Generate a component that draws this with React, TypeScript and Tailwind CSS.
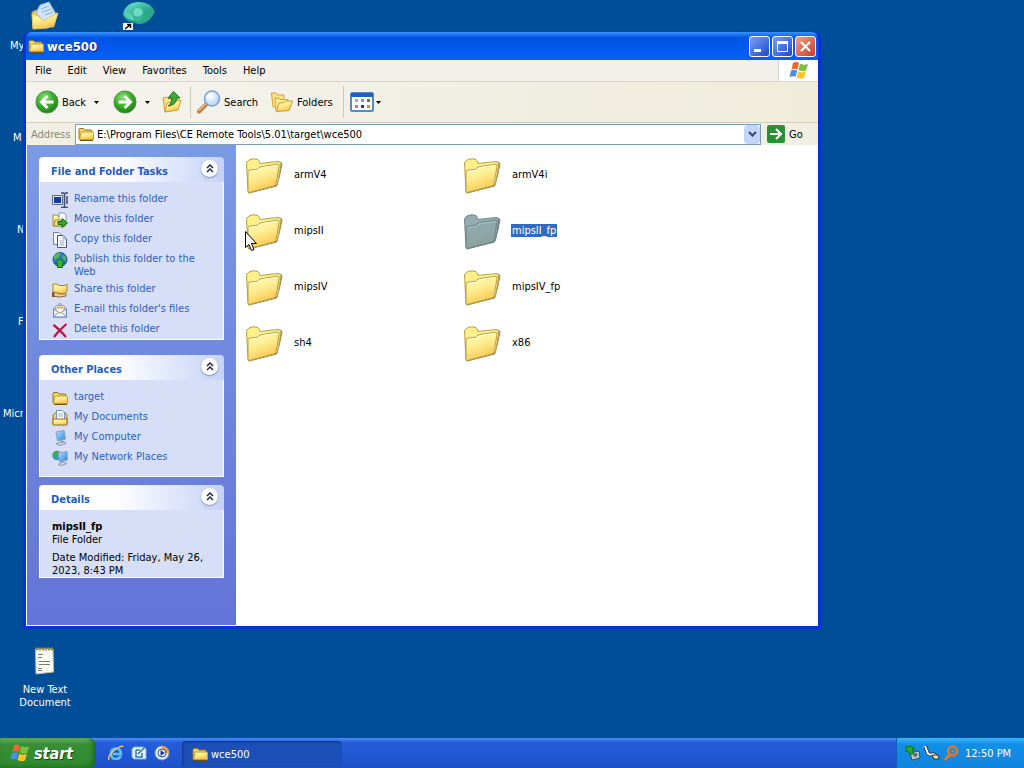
import type { ReactNode } from 'react'

const folders = ['armV4', 'armV4i', 'mipsII', 'mipsII_fp', 'mipsIV', 'mipsIV_fp', 'sh4', 'x86']
const selected = 'mipsII_fp'

function Gradients() {
  return (
    <svg className="absolute h-0 w-0" aria-hidden="true">
      <defs>
        <linearGradient id="folderFront" x1="0" y1="0" x2="0.4" y2="1">
          <stop offset="0" stopColor="#fffbb5" />
          <stop offset="0.5" stopColor="#fdee92" />
          <stop offset="1" stopColor="#f9c64f" />
        </linearGradient>
        <linearGradient id="folderSel" x1="0" y1="0" x2="0.4" y2="1">
          <stop offset="0" stopColor="#8faeb4" />
          <stop offset="1" stopColor="#8ca09c" />
        </linearGradient>
        <radialGradient id="greenBall" cx="0.4" cy="0.3" r="0.75">
          <stop offset="0" stopColor="#8be07c" />
          <stop offset="0.5" stopColor="#3fb02f" />
          <stop offset="1" stopColor="#1c7a12" />
        </radialGradient>
        <radialGradient id="lens" cx="0.4" cy="0.35" r="0.7">
          <stop offset="0" stopColor="#ffffff" />
          <stop offset="1" stopColor="#a5d2f7" />
        </radialGradient>
        <linearGradient id="teal" x1="0" y1="0" x2="0.6" y2="1">
          <stop offset="0" stopColor="#7be6d0" />
          <stop offset="0.5" stopColor="#35b79a" />
          <stop offset="1" stopColor="#127a63" />
        </linearGradient>
        <linearGradient id="screen" x1="0" y1="0" x2="1" y2="1">
          <stop offset="0" stopColor="#a8e8fb" />
          <stop offset="1" stopColor="#2a7fe0" />
        </linearGradient>
      </defs>
    </svg>
  )
}

function BigFolder({ active }: { active: boolean }) {
  const line = active ? '#6f8487' : '#b7a04a'
  const shade = active ? '#6b7f86' : '#9a7f48'
  return (
    <svg viewBox="0 0 48 48" className="h-12 w-12 shrink-0">
      <path d="M9 41 L36.500 34 Q40 24 42 11.500 L40 10 L37 33 L8 40.500 Z" fill={shade} stroke={shade} />
      <path d="M6.500 11 Q7 9 10 7.500 Q14 6 18 7.500 Q19.500 8.500 20 11.500 L38 9.500 Q41.500 9.500 41 12 L37.500 32 L8 39.500 Z" fill={active ? '#93adb0' : '#fff08c'} stroke={line} />
      <path d="M8 19.500 Q8 18.500 10 18 L17 17.500 Q19 15 22 14.500 L38.500 12 Q39.500 12 39 14 L36 32.500 Q35.500 33.500 34 34 L9.500 40.500 Q8 40.500 8 39 Z" fill={active ? 'url(#folderSel)' : 'url(#folderFront)'} stroke={line} />
      <path d="M9.500 21 Q9.500 19.500 12 19 L18 18.500 Q20 16 23 15.500 L37.500 13.500" fill="none" stroke={active ? '#a9c0c4' : '#fffde0'} />
    </svg>
  )
}

function SmallFolder() {
  return (
    <svg viewBox="0 0 16 16" className="h-4 w-4 shrink-0">
      <path d="M1 13V3.500Q1 2.500 2 2.500H5.500L7 4H13Q14 4 14 5V13Z" fill="#f5d560" stroke="#96711a" />
      <path d="M1.500 13.500 3 6.500Q3 6 4 6H14.500Q15.500 6 15.500 7V13.500Z" fill="url(#folderFront)" stroke="#c39a35" />
      <path d="M2 14.500H15" stroke="#6b5315" />
    </svg>
  )
}

function Flag({ className }: { className: string }) {
  return (
    <svg viewBox="0 0 20 19" className={className}>
      <path d="M4 2Q7.500 0 10 2L8.500 8.500Q5.500 7 2.500 8.500Z" fill="#f0662f" />
      <path d="M11 2.500Q14.500 4.500 19 3L17 9.500Q13 11 9.500 9Z" fill="#80c03a" />
      <path d="M2 9.500Q5.500 8 8.200 9.500L6.500 16Q4 14.500.5 16Z" fill="#4a8fe8" />
      <path d="M9.200 10.200Q13 12 16.800 10.500L15 17Q11 18.500 7.500 16.500Z" fill="#fbc52e" />
    </svg>
  )
}

function RoundArrow({ forward }: { forward?: boolean }) {
  return (
    <svg viewBox="0 0 24 24" className="h-6 w-6">
      <circle cx="12" cy="12" r="11" fill="url(#greenBall)" stroke="#4e8f45" />
      {forward ? (
        <path d="M5.500 12H17M11.500 6 17.500 12 11.500 18" fill="none" stroke="#fff" strokeWidth="3" />
      ) : (
        <path d="M18.500 12H7M12.500 6 6.500 12 12.500 18" fill="none" stroke="#fff" strokeWidth="3" />
      )}
    </svg>
  )
}

function Caret() {
  return (
    <svg viewBox="0 0 5 3" className="h-[3px] w-[5px]">
      <path d="M0 0H5L2.500 3Z" fill="#000" />
    </svg>
  )
}

function UpIcon() {
  return (
    <svg viewBox="0 0 24 24" className="h-6 w-6">
      <path d="M3 8 7 7 9 9 18 7V19L5 22Z" fill="#fbe58a" stroke="#c99e37" />
      <path d="M5 22 7 13 21 10 18 20Z" fill="url(#folderFront)" stroke="#c99e37" />
      <path d="M8 16Q12 14 11.500 8H8L13.500 1.500 20 8H16.500Q16.500 15 8 16Z" fill="#3cab35" stroke="#1e7820" />
    </svg>
  )
}

function SearchIcon() {
  return (
    <svg viewBox="0 0 24 24" className="h-6 w-6">
      <path d="M2 21.500 9.500 14" stroke="#bb7a42" strokeWidth="4" strokeLinecap="round" />
      <path d="M2 20.500 8.500 14" stroke="#ecc08c" strokeWidth="1.500" strokeLinecap="round" />
      <circle cx="15" cy="8.500" r="7.500" fill="url(#lens)" stroke="#7f9fd0" strokeWidth="1.500" />
      <path d="M10.500 8Q11 4 15 4" fill="none" stroke="#fff" strokeWidth="1.500" />
    </svg>
  )
}

function FoldersIcon() {
  return (
    <svg viewBox="0 0 24 24" className="h-6 w-6">
      <path d="M1.500 3H6L7 5H14V17H3Z" fill="#fbe58a" stroke="#d0a23a" />
      <path d="M5 8H9L10 9.500H18V20L6 21Z" fill="#fdeb97" stroke="#d0a23a" />
      <path d="M6.500 21.500 9 13 14 12.500 15.500 11 22.500 11 19 20.500Z" fill="url(#folderFront)" stroke="#cf9a2c" />
    </svg>
  )
}

function ViewsIcon() {
  return (
    <svg viewBox="0 0 24 20" className="h-5 w-6">
      <rect x="1" y="1" width="22" height="18" rx="1" fill="#fff" stroke="#2a62b8" strokeWidth="1.500" />
      <path d="M1 1H23V5H1Z" fill="#1f5fc0" />
      <path d="M5 7h3v3H5z" fill="#98a9cb" />
      <path d="M11 7h3v3h-3z" fill="#6fa0d8" />
      <path d="M17 7h3v3h-3z" fill="#41923c" />
      <path d="M5 13h3v3H5z" fill="#e07252" />
      <path d="M11 13h3v3h-3z" fill="#173f9f" />
      <path d="M17 13h3v3h-3z" fill="#c0a020" />
    </svg>
  )
}

function Svg16({ children }: { children: ReactNode }) {
  return (
    <svg viewBox="0 0 16 16" className="h-4 w-4 shrink-0">
      {children}
    </svg>
  )
}

const tasks = [
  {
    label: 'Rename this folder',
    icon: (
      <Svg16>
        <path d="M.5 3.500H10.500V12.500H.5Z" fill="#e4e7f2" stroke="#5c6784" />
        <path d="M2 5H9V11H2Z" fill="#1739a5" />
        <path d="M11.500 2.500H13.500V13.500H11.500Z" fill="#c8cee2" />
        <path d="M9 1H11.500L12.500 2 13.500 1H16M12.500 2V15M9 15.500H11.500L12.500 14.500 13.500 15.500H16M15 4V12" fill="none" stroke="#46506e" strokeWidth="1.500" />
      </Svg16>
    ),
  },
  {
    label: 'Move this folder',
    icon: (
      <Svg16>
        <path d="M1 14V3H5L7 5H13V14Z" fill="url(#folderFront)" stroke="#a88b3b" />
        <path d="M7 1H12L14 3V9H7Z" fill="#fff" stroke="#8797b0" />
        <path d="M2 14 3 8H12L13 14Z" fill="#f8dc78" stroke="#a88b3b" />
        <path d="M6 9.500H10V6.500L15.500 11 10 15.500V12.500H6Z" fill="#36a92d" stroke="#176b18" />
      </Svg16>
    ),
  },
  {
    label: 'Copy this folder',
    icon: (
      <Svg16>
        <path d="M1.500.5H7L9.500 3V12.500H1.500Z" fill="#f5f8ff" stroke="#7183a6" />
        <path d="M5.500 3.500H11L14.500 7V15.500H5.500Z" fill="#fff" stroke="#3f5480" />
        <path d="M11 3.500V7H14.500M7.500 9H12.500M7.500 11H12.500M7.500 13H12.500" fill="none" stroke="#8ea5c8" />
      </Svg16>
    ),
  },
  {
    label: 'Publish this folder to the Web',
    icon: (
      <Svg16>
        <circle cx="8" cy="7.500" r="7" fill="#2c78c8" stroke="#27548c" />
        <path d="M2 4Q5 0 9 1L7 5 4 7 2 8ZM10 3 14 5 14 9 11 7Z" fill="#55bb50" />
        <path d="M5.500 15.500V11.500H3L8 6.500 13 11.500H10.500V15.500Z" fill="#36b52e" stroke="#176b18" />
      </Svg16>
    ),
  },
  {
    label: 'Share this folder',
    icon: (
      <Svg16>
        <path d="M1 11V2H5L7 3.500H13L15 2V9L13 12Z" fill="url(#folderFront)" stroke="#a98227" />
        <path d="M0 11 4 10 7 12 14 11.500 14 14 7 15 0 14Z" fill="#f3c99a" stroke="#91683a" />
        <path d="M0 10.500H2.500V15H0Z" fill="#7a5c2c" />
      </Svg16>
    ),
  },
  {
    label: "E-mail this folder's files",
    icon: (
      <Svg16>
        <path d="M1.500 7 8 1.500 14.500 7V15H1.500Z" fill="#dce9fa" stroke="#6887b0" />
        <path d="M1.500 7V15H14.500V7L8 11Z" fill="#eef5ff" stroke="#6887b0" />
        <path d="M4 3.500H12V8.500L8 11 4 8.500Z" fill="#fff" stroke="#c4a27a" />
        <path d="M5 4.500H11V6.500H5Z" fill="#f2a25c" />
        <path d="M1.500 15 6 10.500M14.500 15 10 10.500" stroke="#6887b0" />
      </Svg16>
    ),
  },
  {
    label: 'Delete this folder',
    icon: (
      <Svg16>
        <path d="M1.500 3Q7 7 14 15M14.500 2Q7 8 2 15" fill="none" stroke="#b8163f" strokeWidth="2.200" />
      </Svg16>
    ),
  },
]

const places = [
  { label: 'target', icon: <SmallFolder /> },
  {
    label: 'My Documents',
    icon: (
      <Svg16>
        <path d="M1 14V5L4 2.500H13L15 5V14Z" fill="#f5d560" stroke="#96711a" />
        <path d="M4.500.5H10L12.500 3V10H4.500Z" fill="#fff" stroke="#7790b8" />
        <path d="M6 4H11M6 6H11" stroke="#8ea5c8" />
        <path d="M1 15V9H15V15Z" fill="url(#folderFront)" stroke="#96711a" />
      </Svg16>
    ),
  },
  {
    label: 'My Computer',
    icon: (
      <Svg16>
        <path d="M4 2 12 .5 13.500 9 5.500 11Z" fill="url(#screen)" stroke="#8a9cc8" />
        <path d="M9 10 11 10 12 13H8Z" fill="#9aa5c4" />
        <path d="M4 13.500 12 12 14 13.500 7 15.500Z" fill="#dfe3f0" stroke="#8a90ad" />
      </Svg16>
    ),
  },
  {
    label: 'My Network Places',
    icon: (
      <Svg16>
        <circle cx="5" cy="5.500" r="4.800" fill="#3a9ad0" />
        <path d="M1 4Q3 0 7 1L6 5 3 8Z" fill="#3fae48" />
        <path d="M6 3 15 1.500 15.500 10 8 12Z" fill="url(#screen)" stroke="#8a9cc8" />
        <path d="M6 14.500 11 12 15 13.500 9 15.500Z" fill="#dfe3f0" stroke="#8a90ad" />
      </Svg16>
    ),
  },
]

function Panel({ title, className, children }: { title: string; className: string; children: ReactNode }) {
  return (
    <section className={className}>
      <header className="flex h-[25px] items-center justify-between rounded-t bg-linear-to-r from-white from-40% to-[#c6d3f7] pr-1.5 pl-3">
        <h2 className="pt-1 text-[11px] font-bold text-[#215dc6]">{title}</h2>
        <button aria-label={`Collapse ${title}`} className="mb-0.5 flex h-[17px] w-[17px] items-center justify-center rounded-full bg-white shadow-[0_1px_2px_#7d8cc0]">
          <svg viewBox="0 0 8 9" className="h-[9px] w-2">
            <path d="M1 4 4 1 7 4M1 8 4 5 7 8" fill="none" stroke="#1c2a50" strokeWidth="1.500" />
          </svg>
        </button>
      </header>
      <div className="border border-t-0 border-white bg-[#d6dff7] px-3">{children}</div>
    </section>
  )
}

function LinkList({ items }: { items: { label: string; icon: ReactNode }[] }) {
  return (
    <ul className="flex flex-col gap-1">
      {items.map((item) => (
        <li key={item.label}>
          <a href="#" className="flex items-start gap-1.5 text-[#2f60bd]">
            {item.icon}
            <span className="max-w-[125px]">{item.label}</span>
          </a>
        </li>
      ))}
    </ul>
  )
}

function TitleBar() {
  const base = 'flex h-[21px] w-[21px] items-center justify-center rounded-[3px] border border-white bg-linear-to-br'
  return (
    <header className="flex h-7 items-center rounded-t-md bg-linear-to-b from-[#3a94ff] via-[#0054e3] via-20% to-[#0660f8] pr-0.5 pl-0.5">
      <SmallFolder />
      <h1 className="flex-1 pl-[3px] text-[13px] font-bold text-white [text-shadow:1px_1px_#0a2a80]">wce500</h1>
      <div className="flex gap-0.5">
        <button aria-label="Minimize" className={`${base} from-[#7a9df5] to-[#1c49cc]`}>
          <svg viewBox="0 0 15 15" className="h-[15px] w-[15px]">
            <path d="M2 10H9V13H2Z" fill="#fff" />
          </svg>
        </button>
        <button aria-label="Maximize" className={`${base} from-[#7a9df5] to-[#1c49cc]`}>
          <svg viewBox="0 0 15 15" className="h-[15px] w-[15px]">
            <path d="M2.500 3V12.500H12.500V3Z" fill="none" stroke="#fff" />
            <path d="M2 2H13V5H2Z" fill="#fff" />
          </svg>
        </button>
        <button aria-label="Close" className={`${base} from-[#f0a086] to-[#c8341a]`}>
          <svg viewBox="0 0 15 15" className="h-[15px] w-[15px]">
            <path d="M3 3 12 12M12 3 3 12" stroke="#fff" strokeWidth="2" />
          </svg>
        </button>
      </div>
    </header>
  )
}

function Toolbar() {
  return (
    <div className="flex h-[41px] items-center border-b border-[#d3cfbe] bg-linear-to-r from-[#f4f3ee] to-[#efecdb] pl-[9px]">
      <button className="flex items-center gap-[3px]">
        <RoundArrow />
        Back
      </button>
      <button aria-label="Back history" className="ml-1.5 px-0.5">
        <Caret />
      </button>
      <button aria-label="Forward" className="ml-3">
        <RoundArrow forward />
      </button>
      <button aria-label="Forward history" className="ml-2">
        <Caret />
      </button>
      <button aria-label="Up" className="ml-2.5">
        <UpIcon />
      </button>
      <div className="mx-1.5 h-8 w-px bg-[#cbc8b8]" />
      <button className="flex items-center gap-[3px]">
        <SearchIcon />
        Search
      </button>
      <button className="ml-3 flex items-center gap-[3px]">
        <FoldersIcon />
        Folders
      </button>
      <div className="mr-1.5 ml-2.5 h-8 w-px bg-[#cbc8b8]" />
      <button aria-label="Views" className="flex items-center gap-0.5">
        <ViewsIcon />
        <Caret />
      </button>
    </div>
  )
}

function AddressBar() {
  return (
    <div className="flex h-[22px] items-center bg-[#f1efe4] pl-[5px]">
      <label htmlFor="address" className="w-11 text-[#8a8879]">
        Address
      </label>
      <div className="flex h-[21px] flex-1 items-center border border-[#7f9db9] bg-white pl-0.5">
        <SmallFolder />
        <input id="address" className="min-w-0 flex-1 pl-[3px] outline-none" defaultValue="E:\Program Files\CE Remote Tools\5.01\target\wce500" />
        <button aria-label="Show addresses" className="flex h-[19px] w-4 items-center justify-center rounded-sm bg-[#c5d3f8]">
          <svg viewBox="0 0 9 6" className="h-1.5 w-[9px]">
            <path d="M1 1 4.500 4.500 8 1" fill="none" stroke="#34486f" strokeWidth="2" />
          </svg>
        </button>
      </div>
      <button className="flex w-[57px] items-center gap-1 pl-1.5">
        <svg viewBox="0 0 18 18" className="h-[18px] w-[18px]">
          <rect width="18" height="18" rx="2" fill="#2b8f35" />
          <path d="M3 9H14M9 4 14 9 9 14" fill="none" stroke="#fff" strokeWidth="2" />
        </svg>
        Go
      </button>
    </div>
  )
}

function ExplorerWindow() {
  return (
    <main className="absolute top-[31px] left-[23px] flex h-[598px] w-[798px] flex-col rounded-t-lg border-x-[3px] border-t border-b-[3px] border-[#0831d9] bg-[#0831d9]">
      <TitleBar />
      <nav className="flex h-[22px] items-center border-b border-[#d8d5c7] bg-[#f2f0e8]">
        <div className="flex flex-1 gap-4 pl-[9px]">
          {['File', 'Edit', 'View', 'Favorites', 'Tools', 'Help'].map((m) => (
            <button key={m}>{m}</button>
          ))}
        </div>
        <div className="flex h-full w-10 items-center justify-center border-l border-[#d8d5c7] bg-white">
          <Flag className="h-[19px] w-5" />
        </div>
      </nav>
      <Toolbar />
      <AddressBar />
      <div className="flex flex-1 border-b border-l border-white bg-white">
        <aside className="w-[209px] bg-linear-to-b from-[#7b9ae6] to-[#6374d6] px-3 pt-3">
          <Panel title="File and Folder Tasks" className="">
            <div className="pt-2.5 pb-px">
              <LinkList items={tasks} />
            </div>
          </Panel>
          <Panel title="Other Places" className="mt-[15px]">
            <div className="pt-2.5 pb-2.5">
              <LinkList items={places} />
            </div>
          </Panel>
          <Panel title="Details" className="mt-2">
            <div className="pt-2.5">
              <p className="font-bold">{selected}</p>
              <p>File Folder</p>
              <p className="mt-[5px]">Date Modified: Friday, May 26, 2023, 8:43 PM</p>
            </div>
          </Panel>
        </aside>
        <ul className="grid grid-cols-[218px_218px] content-start gap-y-2 pt-[7px] pl-1">
          {folders.map((name) => (
            <li key={name}>
              <button className="flex items-center gap-[5px]">
                <BigFolder active={name === selected} />
                <span className={name === selected ? 'mb-1 bg-[#316ac5] px-px text-white' : 'mb-1 px-px'}>{name}</span>
              </button>
            </li>
          ))}
        </ul>
      </div>
    </main>
  )
}

function Taskbar() {
  return (
    <footer className="absolute inset-x-0 bottom-0 flex h-[30px] items-stretch bg-linear-to-b from-[#4d8bf5] via-[#245edb] via-15% to-[#1f50c8] text-white">
      <button className="flex w-24 items-center gap-1 rounded-r-lg bg-linear-to-b from-[#6cb866] via-[#388f36] via-20% to-[#2f8a2e] pl-2.5 shadow-[inset_-3px_-1px_4px_#1f6a20]">
        <Flag className="h-5 w-5" />
        <span className="text-[16px] font-bold italic [text-shadow:1px_1px_1px_#1a4a18]">start</span>
      </button>
      <div className="flex items-center gap-[7px] px-3">
        <button aria-label="Internet Explorer">
          <Svg16>
            <path d="M13 11Q11 14 8 14 3 14 3 8.500 3 3.500 8 3.500 13 3.500 13 9H5" fill="none" stroke="#5cc0fa" strokeWidth="2.500" />
            <path d="M1 15Q-1 12 6 5.500 14-.5 15 2" fill="none" stroke="#f0c860" strokeWidth="1.500" />
          </Svg16>
        </button>
        <button aria-label="Show Desktop">
          <Svg16>
            <path d="M3 2H12L15 4V14H3L1 12V4Z" fill="#e8f3fc" stroke="#7ab4e6" />
            <path d="M5 5V12H11V8M7 9 13 3M5 5H9" fill="none" stroke="#2b76b8" strokeWidth="1.500" />
          </Svg16>
        </button>
        <button aria-label="Media Player">
          <Svg16>
            <circle cx="8" cy="8" r="7" fill="#e5edf8" stroke="#6d9cd2" />
            <path d="M8 1A7 7 0 0 1 15 8L12 8A4 4 0 0 0 8 4Z" fill="#ef9a42" />
            <circle cx="8" cy="8" r="4" fill="#fff" stroke="#24499b" />
            <path d="M6.500 5 11 8 6.500 11Z" fill="#173c98" />
          </Svg16>
        </button>
      </div>
      <button className="mt-[3px] mb-px flex w-40 items-center gap-[3px] rounded-sm bg-[#1c4fb8] pl-2.5 shadow-[inset_1px_1px_2px_#0f3489]">
        <SmallFolder />
        wce500
      </button>
      <div className="ml-auto flex w-32 items-center gap-[3px] border-l border-[#0f5fb8] bg-linear-to-b from-[#3ab5f8] via-[#1290e8] via-20% to-[#1184dd] pl-2">
        <Svg16>
          <path d="M5 8 14 6 15 13 7 15Z" fill="#c2c8c8" stroke="#3a4a50" />
          <path d="M8 9 12 8 12.500 11 9 12Z" fill="#4a6a80" />
          <path d="M1 2 6 1 10 4 7 5 9 9 5 9 3 6 1 7Z" fill="#25a838" stroke="#126a24" />
        </Svg16>
        <Svg16>
          <path d="M1 1 3 6Q4 11 9 9L13 11" fill="none" stroke="#222" strokeWidth="3.500" />
          <path d="M1 1 3 6Q4 11 9 9L13 11" fill="none" stroke="#fff" strokeWidth="2" />
          <path d="M8 10 14 10 15 14 10 14Z" fill="#e8e6b8" stroke="#333" />
        </Svg16>
        <Svg16>
          <circle cx="9.500" cy="6" r="4.500" fill="none" stroke="#e87820" strokeWidth="2.500" />
          <path d="M7 9.500 1.500 15" stroke="#e87820" strokeWidth="2.500" />
          <circle cx="9.500" cy="6" r="1.500" fill="#e87820" />
        </Svg16>
        <time className="pl-[3px]">12:50 PM</time>
      </div>
    </footer>
  )
}

function Desktop() {
  return (
    <div className="text-white">
      <svg viewBox="0 0 30 30" className="absolute top-0 left-[30px] h-[30px] w-[30px]">
        <path d="M2 12 6 10 10 12 27 13 24 27 3 28Z" fill="#e9c95c" stroke="#b38f35" />
        <path d="M10 5 19 2 27 16 14 22 6 13Z" fill="#cfe5fb" stroke="#8fb8e6" />
        <path d="M11 9 19 6M12 12 21 9M15 15 23 12" stroke="#83afe0" />
        <path d="M2 14 8 16 14 21 20 17 28 13 24 25 17 28 3 29Z" fill="url(#folderFront)" stroke="#e4c766" />
      </svg>
      <svg viewBox="0 0 34 30" className="absolute top-0 left-[122px] h-[30px] w-[34px]">
        <path d="M1 14Q4 2 17 2 29 2 33 12 27 25 15 24 3 22 1 14Z" fill="url(#teal)" />
        <path d="M13 21Q15 9 32 11 28 24 16 24Z" fill="#2ba88a" />
        <path d="M2 11Q9 9 13 21 6 20 2 15Z" fill="#54cdb4" />
        <circle cx="16" cy="13" r="5" fill="#6ed8c0" />
        <path d="M11 14Q16 20 22 12L20 20 14 22Z" fill="#39b497" />
        <path d="M1 23H11V30H1Z" fill="#fff" />
        <path d="M3 29 8 25M5 24.500H8.500V28" fill="none" stroke="#000" strokeWidth="1.500" />
      </svg>
      <span className="absolute top-[39px] left-[10px]">My</span>
      <span className="absolute top-[131px] left-[13px]">M</span>
      <span className="absolute top-[223px] left-[17px]">N</span>
      <span className="absolute top-[315px] left-[18px]">F</span>
      <span className="absolute top-[407px] left-[3px]">Micr</span>
      <button className="absolute top-[646px] left-[8px] flex w-[74px] flex-col items-center gap-[7px]">
        <svg viewBox="0 0 22 30" className="h-[30px] w-[22px]">
          <path d="M3 3 19 2 21 26 4 28Z" fill="#2b5070" />
          <path d="M1.500 3H19L19.500 26 2 28Z" fill="#fbfbf5" stroke="#b9bcb0" />
          <path d="M2 3H19" stroke="#a08c3c" strokeWidth="3" strokeDasharray="2 1" />
          <path d="M4 8.500H9M4 11.500H8M5 15.500H16M5 18.500H16M4 22.500H8M4 24.500H8" stroke="#777" />
        </svg>
        <span>New Text Document</span>
      </button>
    </div>
  )
}

export default function App() {
  return (
    <div className="relative min-h-screen overflow-hidden bg-[#004e98] font-['DejaVu_Sans_Condensed','DejaVu_Sans',sans-serif] text-[11px] leading-[13px]">
      <Gradients />
      <Desktop />
      <ExplorerWindow />
      <Taskbar />
      {/* Mouse pointer */}
      <svg viewBox="0 0 13 21" className="absolute top-[231px] left-[245px] h-[21px] w-[13px]">
        <path d="M.5.5V16.500L4 13.500 6.500 19.500 9 18.500 6.500 12.500H11.500Z" fill="#fff" stroke="#000" />
      </svg>
    </div>
  )
}
